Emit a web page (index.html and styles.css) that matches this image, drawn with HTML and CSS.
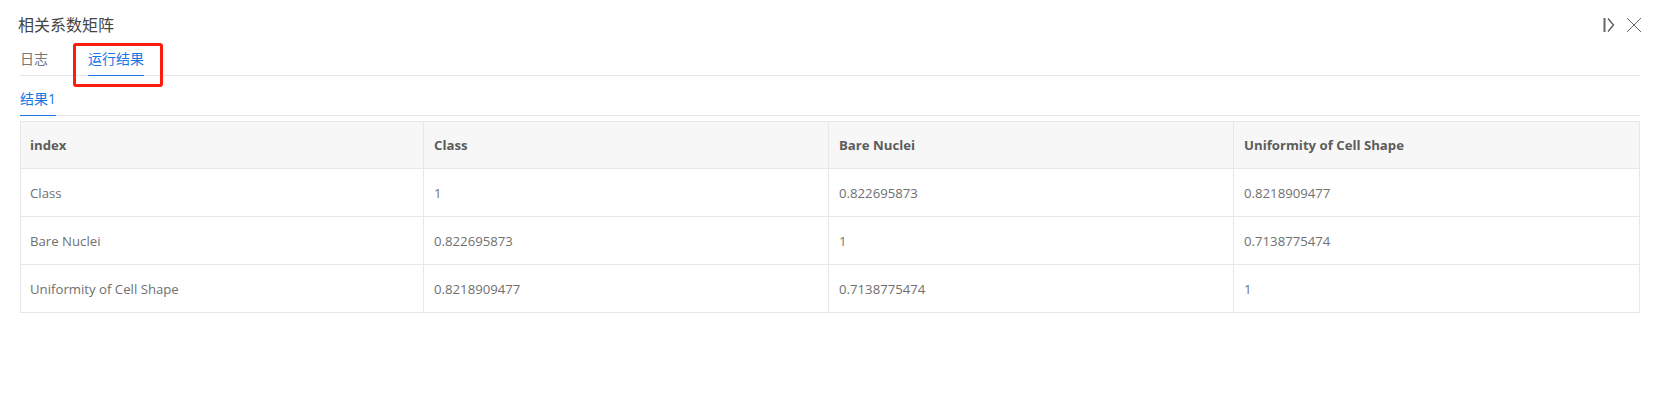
FILE: index.html
```html
<!DOCTYPE html>
<html lang="zh">
<head>
<meta charset="utf-8">
<title>相关系数矩阵</title>
<link rel="stylesheet" href="styles.css">
</head>
<body>
<div class="panel">
  <header class="head">
    <h1 class="title">相关系数矩阵</h1>
    <div class="actions">
      <svg class="icon" width="12" height="16" viewBox="0 0 12 16"><path d="M1.5 1v14" stroke="#666" stroke-width="2" fill="none"/><path d="M5 1.5 10.5 8 5 14.5" stroke="#555" stroke-width="1.3" fill="none"/></svg>
      <svg class="icon" width="16" height="16" viewBox="0 0 16 16"><path d="M1 1 15 15M15 1 1 15" stroke="#666" stroke-width="1" fill="none"/></svg>
    </div>
  </header>
  <nav class="tabs">
    <span class="tab">日志</span>
    <span class="tab active">运行结果</span>
    <span class="mark"></span>
  </nav>
  <nav class="subtabs">
    <span class="subtab">结果1</span>
  </nav>
  <table class="grid">
    <thead>
      <tr><th class="first">index</th><th>Class</th><th>Bare Nuclei</th><th class="last">Uniformity of Cell Shape</th></tr>
    </thead>
    <tbody>
      <tr><td class="first">Class</td><td>1</td><td>0.822695873</td><td>0.8218909477</td></tr>
      <tr><td class="first">Bare Nuclei</td><td>0.822695873</td><td>1</td><td>0.7138775474</td></tr>
      <tr><td class="first">Uniformity of Cell Shape</td><td>0.8218909477</td><td>0.7138775474</td><td>1</td></tr>
    </tbody>
  </table>
</div>
</body>
</html>
```
FILE: styles.css
```css
html, body { margin: 0; padding: 0; background: #fff; }
body { font-family: "Open Sans", "Noto Sans CJK SC", sans-serif; color: #666; width: 1658px; height: 415px; overflow: hidden; }
.panel { padding: 0 18px 0 20px; position: relative; }
.head { display: flex; justify-content: space-between; align-items: center; height: 41px; margin-left: -2px; margin-right: -2px; padding-top: 9px; box-sizing: border-box; }
.title { margin: 0; font-size: 16px; font-weight: 400; color: #444; line-height: 20px; }
.actions { display: flex; align-items: center; gap: 11px; }
.icon { display: block; }
.tabs { display: flex; height: 34px; border-bottom: 1px solid #e4e4ec; gap: 40px; position: relative; }
.tab { font-size: 14px; line-height: 20px; padding: 8px 0 0; color: #777; }
.tab.active { color: #1677e6; border-bottom: 1px solid #1677e6; height: 26px; }
.mark { position: absolute; left: 53px; top: 2px; width: 84px; height: 38px; border: 3px solid #fb1c10; border-radius: 3px; }
.subtabs { display: flex; height: 40px; border-bottom: 1px solid #e4e4ec; box-sizing: border-box; }
.subtab { font-size: 14px; line-height: 20px; padding-top: 13px; height: 26px; color: #1677e6; border-bottom: 1px solid #1677e6; width: 36px; }
.grid { border-collapse: collapse; table-layout: fixed; width: 1620px; margin-top: 5px; font-size: 13.2px; }
.grid th, .grid td { border: 1px solid #e8e8e8; height: 48px; padding: 0 10px; text-align: left; box-sizing: border-box; }
.grid th { background: #f7f7f7; font-weight: 700; color: #5c5c5c; height: 47px; width: 405px; }
.grid th.first { width: 403px; }
.grid th.last { width: auto; }
.grid th.first, .grid td.first { padding-left: 9px; }
.grid td { color: #707070; }
```
